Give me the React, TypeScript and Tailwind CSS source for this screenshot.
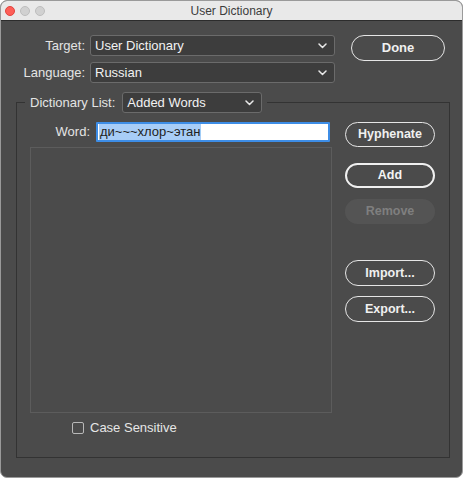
import React from "react";

const Chevron: React.FC = () => (
  <svg width="9" height="6" viewBox="0 0 9 6" fill="none">
    <path d="M1 1L4.5 4.5L8 1" stroke="#e8e8e8" strokeWidth="1.5" strokeLinecap="round" strokeLinejoin="round" />
  </svg>
);

const Select: React.FC<{ value: string; className: string }> = ({ value, className }) => (
  <div
    className={`h-[21px] flex items-center justify-between pl-[4px] pr-[7px] rounded-[3px] border border-[#6b6b6b] bg-[#3d3d3d] text-[#f2f2f2] text-[13px] ${className}`}
  >
    <span>{value}</span>
    <Chevron />
  </div>
);

const PillButton: React.FC<{ label: string; variant?: "normal" | "default" | "disabled"; className?: string }> = ({
  label,
  variant = "normal",
  className = "",
}) => {
  const styles =
    variant === "default"
      ? "border-2 border-[#f0f0f0] text-[#f4f4f4]"
      : variant === "disabled"
      ? "bg-[#545454] text-[#7f7f7f]"
      : "border border-[#e6e6e6] text-[#f0f0f0]";
  return (
    <button className={`h-[25px] w-[90px] rounded-full flex items-center justify-center font-bold text-[12.5px] ${styles} ${className}`}>
      {label}
    </button>
  );
};

export default function App() {
  return (
    <div className="w-[463px] h-[478px] bg-white" style={{ fontFamily: '"Liberation Sans", Arial, sans-serif' }}>
      <div className="w-full h-full flex flex-col rounded-[7px] overflow-hidden border border-[#9a9a9a] bg-[#4b4b4b]">
        {/* title bar */}
        <div className="relative h-[20px] shrink-0 flex items-center bg-[#e9e9e9] border-b border-[#2c2c2c]">
          <div className="flex items-center gap-[5px] pl-[4px]">
            <span className="w-[10px] h-[10px] rounded-full bg-[#fd5e57] border border-[#e0443e]" />
            <span className="w-[10px] h-[10px] rounded-full bg-[#d1d1d1] border border-[#bdbdbd]" />
            <span className="w-[10px] h-[10px] rounded-full bg-[#d1d1d1] border border-[#bdbdbd]" />
          </div>
          <div className="absolute inset-0 flex items-center justify-center text-[12px] text-[#3c3c3c]">User Dictionary</div>
        </div>

        {/* top controls */}
        <div className="flex pt-[14px]">
          <div className="flex flex-col gap-[6px]">
            <div className="flex items-center">
              <span className="w-[84px] text-right text-[13px] text-[#e4e4e4]">Target:</span>
              <Select value="User Dictionary" className="ml-[5px] w-[245px]" />
            </div>
            <div className="flex items-center">
              <span className="w-[84px] text-right text-[13px] text-[#e4e4e4]">Language:</span>
              <Select value="Russian" className="ml-[5px] w-[245px]" />
            </div>
          </div>
          <button className="ml-[16px] h-[26px] w-[94px] rounded-full border border-[#e6e6e6] text-[#f0f0f0] font-bold text-[13px]">
            Done
          </button>
        </div>

        {/* dictionary list group */}
        <fieldset className="mt-[9px] ml-[15px] w-[434px] h-[366px] border border-[#333333] pl-[13px] pr-[13px]">
          <legend className="-ml-[5px] px-[5px] flex items-center">
            <span className="text-[13px] text-[#e4e4e4]">Dictionary List:</span>
            <Select value="Added Words" className="ml-[7px] w-[140px]" />
          </legend>
          <div className="flex pt-[9px]">
            <div className="flex flex-col w-[302px]">
              <div className="flex items-center">
                <span className="w-[60px] text-right text-[13px] text-[#e4e4e4]">Word:</span>
                <div className="ml-[6px] w-[234px] h-[20px] bg-white border-2 border-[#3d8de6] rounded-[1px] flex items-center pl-[1px]">
                  <span className="bg-[#a8cdf7] text-[#222222] text-[13px] leading-[16px] px-[1px]">ди~~~хлор~этан</span>
                </div>
              </div>
              <div className="mt-[5px] h-[266px] border border-[#5c5c5c]" />
              <label className="mt-[7px] ml-[42px] flex items-center gap-[6px] leading-[16px]">
                <span className="w-[12px] h-[12px] rounded-[2px] border border-[#b8b8b8]" />
                <span className="text-[13px] text-[#e6e6e6]">Case Sensitive</span>
              </label>
            </div>
            <div className="ml-[13px] flex flex-col">
              <PillButton label="Hyphenate" />
              <PillButton label="Add" variant="default" className="mt-[16px]" />
              <PillButton label="Remove" variant="disabled" className="mt-[11px]" />
              <PillButton label="Import..." className="mt-[36px] h-[26px]" />
              <PillButton label="Export..." className="mt-[10px] h-[26px]" />
            </div>
          </div>
        </fieldset>
      </div>
    </div>
  );
}
